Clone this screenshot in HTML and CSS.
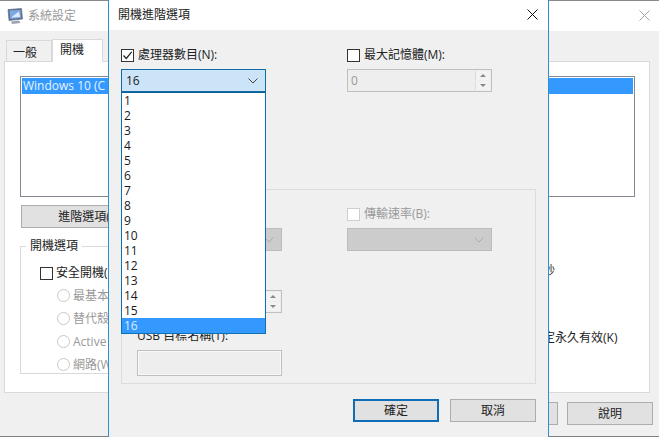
FILE: index.html
```html
<!DOCTYPE html>
<html lang="zh-Hant">
<head>
<meta charset="utf-8">
<title>開機進階選項</title>
<link rel="stylesheet" href="styles.css">
</head>
<body>
<div class="window back">
  <div class="titlebar back-title">
    <svg class="app-icon" width="18" height="18" viewBox="0 0 18 18"><path d="M2 2.5 15.5 1.5 16.5 12 3 13.5Z" fill="#5f7290" stroke="#56667c" stroke-width=".6"/><path d="M3.6 3.6 14.4 2.9 15.1 10.8 4.4 12Z" fill="#7ea8e2"/><path d="M5 10.5 13 4.5 14 10Z" fill="#dce9fa"/><path d="M5 14.5 13 13.6 14.5 16 6 17Z" fill="#9aa4b0"/></svg>
    <span class="back-caption">系統設定</span>
    <svg class="close" width="11" height="11" viewBox="0 0 11 11"><path d="M.5.5 10.5 10.5M10.5.5.5 10.5" stroke="#a3a3a3" fill="none"/></svg>
  </div>
  <div class="tabs">
    <div class="tab">一般</div>
    <div class="tab tab-active">開機</div>
  </div>
  <div class="page">
    <div class="listbox"><div class="list-row">Windows 10 (C</div></div>
    <button class="btn btn-advanced" type="button">進階選項(</button>
    <div class="page-lower">
      <fieldset class="bootgroup">
        <legend>開機選項</legend>
        <div class="check-row boot-check"><span class="check"></span><span>安全開機(</span></div>
        <div class="radio-row"><span class="radio"></span><span>最基本</span></div>
        <div class="radio-row"><span class="radio"></span><span>替代殼</span></div>
        <div class="radio-row"><span class="radio"></span><span>Active</span></div>
        <div class="radio-row"><span class="radio"></span><span>網路(W</span></div>
      </fieldset>
      <div class="side">
        <div class="side-seconds">秒</div>
        <div class="side-persist">定永久有效(K)</div>
      </div>
    </div>
  </div>
  <div class="back-actions">
    <button class="btn" type="button"></button>
    <button class="btn" type="button">說明</button>
  </div>
</div>

<div class="window dialog">
  <div class="titlebar dialog-title">
    <span>開機進階選項</span>
    <svg class="close" width="11" height="11" viewBox="0 0 11 11"><path d="M.5.5 10.5 10.5M10.5.5.5 10.5" stroke="#111" fill="none"/></svg>
  </div>
  <div class="dialog-body">
    <div class="columns top-columns">
      <div class="col">
        <label class="check-row field-label"><span class="check"><svg width="11" height="11" viewBox="0 0 11 11"><path d="M1.5 5.5 4.3 8.5 9.7 1.8" stroke="#222" stroke-width="1.2" fill="none"/></svg></span><span>處理器數目(N):</span></label>
        <div class="combo combo-open">
          <span>16</span>
          <svg class="chev" width="10" height="6" viewBox="0 0 10 6"><path d="M.5.5 5 5 9.5.5" stroke="#444" fill="none"/></svg>
          <ul class="dropdown">
            <li>1</li><li>2</li><li>3</li><li>4</li><li>5</li><li>6</li><li>7</li><li>8</li><li>9</li><li>10</li><li>11</li><li>12</li><li>13</li><li>14</li><li>15</li><li class="picked">16</li>
          </ul>
        </div>
      </div>
      <div class="col">
        <label class="check-row field-label"><span class="check"></span><span>最大記憶體(M):</span></label>
        <div class="spinner"><span class="spin-value">0</span><span class="spin-btns"><span class="spin-up"></span><span class="spin-down"></span></span></div>
      </div>
    </div>
    <div class="debug-group">
      <div class="columns">
        <div class="col">
          <div class="combo combo-off"><svg class="chev" width="10" height="6" viewBox="0 0 10 6"><path d="M.5.5 5 5 9.5.5" stroke="#aaa" fill="none"/></svg></div>
        </div>
        <div class="col col-baud">
          <label class="check-row field-label label-off"><span class="check check-off"></span><span>傳輸速率(B):</span></label>
          <div class="combo combo-off"><svg class="chev" width="10" height="6" viewBox="0 0 10 6"><path d="M.5.5 5 5 9.5.5" stroke="#aaa" fill="none"/></svg></div>
        </div>
      </div>
      <div class="spinner spinner-channel"><span class="spin-value"></span><span class="spin-btns"><span class="spin-up"></span><span class="spin-down"></span></span></div>
      <div class="usb-label">USB 目標名稱(T):</div>
      <div class="usb-input"></div>
    </div>
    <div class="dialog-actions">
      <button class="btn btn-default" type="button">確定</button>
      <button class="btn" type="button">取消</button>
    </div>
  </div>
</div>
</body>
</html>
```

FILE: styles.css
```css
* { box-sizing: border-box; }
html, body { margin: 0; height: 100%; }
body {
  position: relative;
  width: 659px;
  height: 437px;
  overflow: hidden;
  background: #f0f0f0;
  color: #222;
  font: 12px/16px "Open Sans", "Noto Sans CJK TC", sans-serif;
}
.window { position: absolute; top: 0; height: 437px; background: #f0f0f0; overflow: hidden; }
.titlebar { display: flex; align-items: center; background: #fff; }
.close { flex: none; margin: 0 0 2px auto; }

/* back window */
.back { left: 0; width: 659px; border-top: 1px solid #8a8a8a; border-bottom: 1px solid #808080; }
.back-title { height: 30px; padding: 0 9px 0 6px; }
.app-icon { flex: none; }
.back-caption { margin-left: 4px; color: #999; }
.tabs { display: flex; align-items: flex-end; height: 30px; padding-left: 6px; }
.tab { width: 46px; height: 21px; padding: 4px 0 0 6px; background: #f0f0f0; border: 1px solid #d9d9d9; border-bottom: 0; }
.tab-active { width: 51px; height: 23px; padding: 2px 0 0 7px; margin-bottom: -1px; background: #fff; position: relative; z-index: 1; }
.page { height: 332px; margin: 0 9px 0 4px; padding: 14px 14px 0 15px; background: #fff; border: 1px solid #d9d9d9; }
.listbox { height: 121px; padding: 1px; background: #fff; border: 1px solid #828790; }
.list-row { height: 16px; padding-left: 1px; background: #3399ff; color: #e8f3ff; white-space: nowrap; }
.btn { display: block; width: 86px; height: 23px; padding: 0; background: #e1e1e1; border: 1px solid #adadad; color: #222; font: inherit; }
.btn-advanced { width: 126px; margin: 8px 0 0 1px; line-height: 19px; }
.page-lower { display: flex; }
.bootgroup { flex: none; width: 320px; height: 136px; margin: 10px 0 0; padding: 11px 0 0 19px; border: 1px solid #d9d9d9; }
.bootgroup legend { margin: -7px 0 0 -14px; padding: 0 4px; line-height: 16px; color: #222; }
.check-row { display: flex; align-items: center; gap: 4px; white-space: nowrap; }
.boot-check { gap: 3px; }
.check { flex: none; display: flex; align-items: center; justify-content: center; width: 13px; height: 13px; background: #fff; border: 1px solid #333; }
.check-off { border-color: #cfcfcf; }
.radio-row { display: flex; align-items: center; gap: 3px; height: 23px; margin-left: 17px; color: #999; white-space: nowrap; }
.bootgroup .check-row + .radio-row { margin-top: 3px; }
.radio { flex: none; width: 13px; height: 13px; background: #fff; border: 1px solid #c8c8c8; border-radius: 50%; }
.side { flex: none; width: 296px; padding-left: 203px; }
.side-seconds { margin-top: 35px; color: #333; }
.side-persist { margin-top: 51px; color: #222; white-space: nowrap; }
.back-actions { display: flex; justify-content: flex-end; gap: 9px; padding: 9px 6px 0 0; }

/* front dialog */
.dialog { left: 108px; width: 441px; border-left: 1px solid #2f8fd0; border-right: 1px solid #2f8fd0; }
.dialog-title { height: 30px; padding: 0 10px 0 9px; line-height: 16px; }
.dialog-body { padding: 17px 12px 0; }
.columns { display: flex; gap: 81px; }
.col { flex: none; width: 145px; }
.top-columns { height: 142px; }
.field-label { height: 16px; margin-bottom: 6px; }
.label-off { color: #999; }
.combo { position: relative; display: flex; align-items: center; justify-content: space-between; width: 145px; height: 23px; padding: 0 7px 0 4px; }
.chev { flex: none; margin-left: auto; }
.combo-open { background: #cce4f7; border: 1px solid #0f6aa5; }
.combo-off { background: #ccc; border: 1px solid #bcbcbc; }
.dropdown { position: absolute; z-index: 5; left: -1px; top: 22px; width: 145px; margin: 0; padding: 0; list-style: none; background: #fff; border: 1px solid #0f6fb0; border-top-color: #0f5f95; }
.dropdown li { height: 15px; padding-left: 2px; line-height: 15px; color: #1a1a1a; }
.dropdown .picked { background: #3399ff; color: #dcecff; }
.spinner { display: flex; align-items: stretch; width: 145px; height: 23px; background: #eee; border: 1px solid #bfbfbf; }
.spin-value { flex: 1; padding-left: 3px; line-height: 21px; color: #999; }
.spin-btns { flex: none; display: flex; flex-direction: column; width: 16px; padding: 1px 1px 1px 0; gap: 1px; }
.spin-up, .spin-down { flex: 1; position: relative; background: #f3f3f3; border-left: 1px solid #dcdcdc; }
.spin-up::after, .spin-down::after { content: ""; position: absolute; left: 4px; top: 3px; border: 3px solid transparent; border-top: 0; border-bottom: 3px solid #888; }
.spin-down::after { border-bottom: 0; border-top: 3px solid #888; }
.debug-group { width: 415px; height: 195px; padding: 16px 15px 0; border: 1px solid #dcdcdc; }
.debug-group .columns { gap: 65px; align-items: flex-end; }
.spinner-channel { margin-top: 39px; }
.usb-label { margin-top: 15px; }
.usb-input { width: 145px; height: 26px; margin-top: 6px; background: #eee; border: 1px solid #bfbfbf; box-shadow: inset 0 0 0 1px #f8f8f8; }
.dialog-actions { display: flex; justify-content: flex-end; gap: 11px; margin-top: 15px; }
.btn-default { border: 2px solid #0f6cb5; }
```
